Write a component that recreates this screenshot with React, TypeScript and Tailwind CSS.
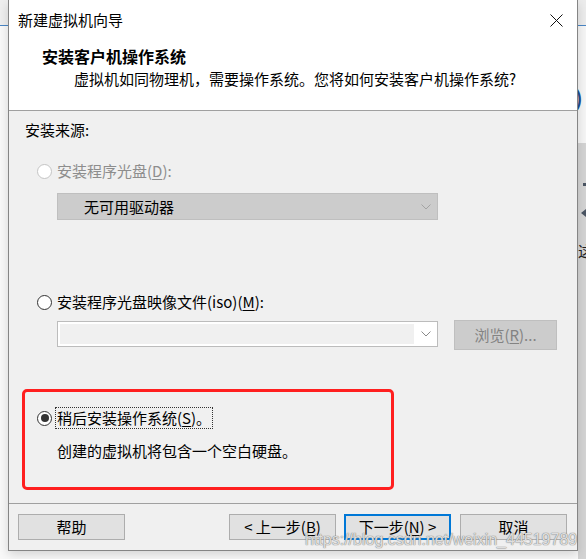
import React from 'react';

type RadioProps = { checked?: boolean; disabled?: boolean };

const Radio: React.FC<RadioProps> = ({ checked, disabled }) => (
  <span
    className={`flex h-[15px] w-[15px] shrink-0 items-center justify-center rounded-full border bg-white ${
      disabled ? 'border-[#c4c4c4]' : 'border-[#333333]'
    }`}
  >
    {checked && <span className="h-[8px] w-[8px] rounded-full bg-[#333333]" />}
  </span>
);

const Chevron: React.FC<{ color: string }> = ({ color }) => (
  <svg width="10" height="6" viewBox="0 0 10 6" className="shrink-0">
    <polyline points="0.5,0.5 5,5 9.5,0.5" fill="none" stroke={color} strokeWidth="1" />
  </svg>
);

const WizardButton: React.FC<{ children: React.ReactNode; primary?: boolean }> = ({ children, primary }) => (
  <div
    className={`flex h-[26px] w-[107px] items-center justify-center bg-[#e1e1e1] text-[15px] leading-[20px] text-black ${
      primary ? 'border-2 border-[#0078d7]' : 'border border-[#adadad]'
    }`}
  >
    {children}
  </div>
);

const App: React.FC = () => {
  return (
    <div className="relative flex h-[559px] w-[586px] overflow-hidden bg-[#fafafa] font-['Noto_Sans_CJK_SC','Liberation_Sans',sans-serif]">
      {/* background window, left edge */}
      <div className="flex w-[8px] shrink-0 flex-col">
        <div className="h-[25px] bg-[#efefef]" />
        <div className="h-px bg-[#4a86c5]" />
        <div className="flex-1 bg-[#f9f9f9]" />
      </div>

      {/* dialog */}
      <div className="relative z-10 flex h-[551px] w-[570px] shrink-0 flex-col border-x border-b border-[#858585] bg-[#f0f0f0] shadow-[0_4px_10px_rgba(0,0,0,0.15)]">
        {/* header */}
        <div className="h-[111px] shrink-0 border-b border-[#a0a0a0] bg-white">
          <div className="mt-[10px] flex h-[20px] items-center justify-between pl-[9px] pr-[14px]">
            <span className="text-[15px] leading-[20px] text-black">新建虚拟机向导</span>
            <svg width="13" height="13" viewBox="0 0 13 13">
              <path d="M0.5 0.5 L12.5 12.5 M12.5 0.5 L0.5 12.5" stroke="#111" strokeWidth="1" />
            </svg>
          </div>
          <div className="mt-[16px] pl-[33px] text-[16px] font-bold leading-[20px] text-black">安装客户机操作系统</div>
          <div className="mt-[3px] pl-[65px] text-[15px] leading-[20px] text-black">
            虚拟机如同物理机，需要操作系统。您将如何安装客户机操作系统?
          </div>
        </div>

        {/* body */}
        <div className="flex h-[393px] shrink-0 flex-col border-b border-[#a0a0a0] pl-[16px] text-[15px] leading-[20px]">
          <div className="mt-[9px] text-black">安装来源:</div>

          <div className="mt-[21px] flex h-[20px] items-center pl-[12px]">
            <Radio disabled />
            <span className="ml-[5px] text-[#8d8d8d]">
              安装程序光盘(<span className="underline underline-offset-2">D</span>):
            </span>
          </div>

          <div className="ml-[32px] mt-[12px] flex h-[27px] w-[381px] items-center justify-between border border-[#bfbfbf] bg-[#cccccc] pl-[26px] pr-[6px]">
            <span className="text-black">无可用驱动器</span>
            <Chevron color="#a3a3a3" />
          </div>

          <div className="mt-[72px] flex h-[20px] items-center pl-[12px]">
            <Radio />
            <span className="ml-[5px] text-black">
              安装程序光盘映像文件(iso)(<span className="underline underline-offset-2">M</span>):
            </span>
          </div>

          <div className="mt-[8px] flex items-start">
            <div className="ml-[32px] mt-[1px] flex h-[26px] w-[381px] items-center border border-[#bcbcbc] bg-white pl-[2px] pr-[6px]">
              <div className="h-[20px] w-[354px] bg-[#f0f0f0]" />
              <div className="flex flex-1 justify-end">
                <Chevron color="#8a8a8a" />
              </div>
            </div>
            <div className="ml-[16px] flex h-[30px] w-[103px] items-center justify-center border border-[#bfbfbf] bg-[#cccccc] text-[#838383]">
              浏览(<span className="underline underline-offset-2">R</span>)...
            </div>
          </div>

          {/* highlighted option */}
          <div className="-ml-[3px] mt-[39px] flex h-[101px] w-[372px] flex-col rounded-[5px] border-[3px] border-[#ff1f1f] pl-[12px] pt-[16px]">
            <div className="flex h-[20px] items-center">
              <Radio checked />
              <span className="ml-[4px] h-[20px] px-[1px] leading-[20px] text-black outline-1 outline-dotted outline-[#333]">
                稍后安装操作系统(<span className="underline underline-offset-2">S</span>)。
              </span>
            </div>
            <div className="ml-[20px] mt-[13px] text-black">创建的虚拟机将包含一个空白硬盘。</div>
          </div>
        </div>

        {/* footer */}
        <div className="flex flex-1 items-start pl-[9px] pt-[10px]">
          <WizardButton>帮助</WizardButton>
          <div className="ml-[104px]">
            <WizardButton>
              &lt; 上一步(<span className="underline underline-offset-2">B</span>)
            </WizardButton>
          </div>
          <div className="ml-[8px]">
            <WizardButton primary>
              下一步(<span className="underline underline-offset-2">N</span>) &gt;
            </WizardButton>
          </div>
          <div className="ml-[9px]">
            <WizardButton>取消</WizardButton>
          </div>
        </div>
      </div>

      {/* background window, right edge */}
      <div className="flex w-[8px] shrink-0 flex-col overflow-hidden">
        <div className="h-[25px] bg-[#ececec]" />
        <div className="h-px bg-[#4a86c5]" />
        <div className="relative h-[117px] bg-[#f6f6f6]">
          <span className="absolute -left-[3px] top-[60px] text-[20px] font-bold leading-[24px] text-[#1f4e8c]">)</span>
        </div>
        <div className="relative flex-1 bg-[#d4d4d4]">
          <span className="absolute left-[5px] top-[40px] h-[3px] w-[3px] bg-[#4b5563]" />
          <span className="absolute left-[3px] top-[66px] h-0 w-0 border-y-[4px] border-r-[5px] border-y-transparent border-r-[#4b5563]" />
          <span className="absolute left-0 top-[98px] text-[15px] leading-[20px] text-[#222]">这</span>
        </div>
      </div>

      {/* blog watermark */}
      <span className="absolute left-[305px] top-[532px] z-20 font-['Liberation_Sans',sans-serif] text-[16px] leading-[16px] text-[rgba(255,255,255,0.75)] [text-shadow:0_0_1px_#7a7a7a,0_0_1px_#7a7a7a]">
        https://blog.csdn.net/weixin_44519789
      </span>
    </div>
  );
};

export default App;
